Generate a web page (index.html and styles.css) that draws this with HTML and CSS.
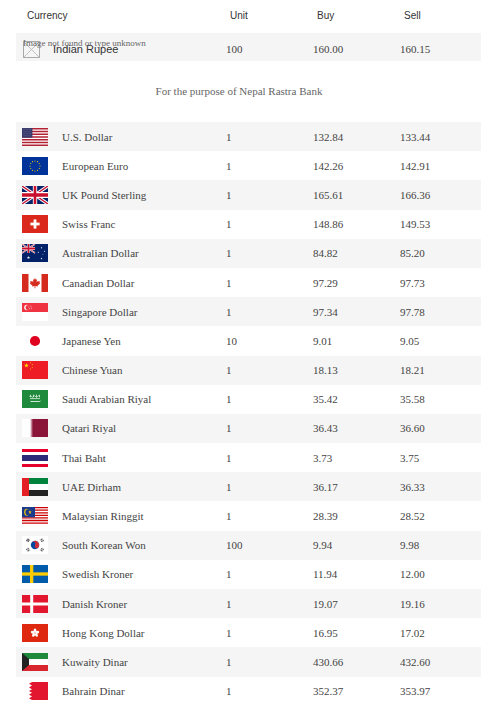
FILE: index.html
```html
<!DOCTYPE html>
<html lang="en">
<head>
<meta charset="utf-8">
<title>Exchange Rates</title>
<link rel="stylesheet" href="styles.css">
</head>
<body>
<svg class="defs" width="0" height="0" aria-hidden="true">
  <defs>
    <polygon id="st" points="0,-1 0.2245,-0.309 0.951,-0.309 0.363,0.118 0.588,0.809 0,0.382 -0.588,0.809 -0.363,0.118 -0.951,-0.309 -0.2245,-0.309"/>
    <g id="uj">
      <rect width="60" height="30" fill="#012169"/>
      <path d="M0,0 L60,30 M60,0 L0,30" stroke="#fff" stroke-width="6"/>
      <path d="M0,0 L60,30 M60,0 L0,30" stroke="#C8102E" stroke-width="2.5"/>
      <path d="M30,0 V30 M0,15 H60" stroke="#fff" stroke-width="10"/>
      <path d="M30,0 V30 M0,15 H60" stroke="#C8102E" stroke-width="6"/>
    </g>
  </defs>
</svg>

<div class="rates">
  <div class="head">
    <div class="h-cur">Currency</div>
    <div class="h-num">Unit</div>
    <div class="h-num">Buy</div>
    <div class="h-num">Sell</div>
  </div>

  <div class="inr">
    <div class="inr-name">
      <svg class="broken" viewBox="0 0 17 17"><rect x="0.5" y="0.5" width="16" height="16" fill="none" stroke="#a8a8a8"/><path d="M0.5,0.5 L16.5,16.5 M16.5,0.5 L0.5,16.5" stroke="#b5b5b5" stroke-width="0.8"/></svg>
      <span class="alt">Image not found or type unknown</span>
      <span class="inr-label">Indian Rupee</span>
    </div>
    <div class="num">100</div>
    <div class="num">160.00</div>
    <div class="num">160.15</div>
  </div>

  <p class="caption">For the purpose of Nepal Rastra Bank</p>

  <div class="list">
    <div class="row">
      <div class="flag"><svg viewBox="0 0 26 13" preserveAspectRatio="none"><rect width="26" height="13" fill="#fff"/><path d="M0,0.5H26M0,2.5H26M0,4.5H26M0,6.5H26M0,8.5H26M0,10.5H26M0,12.5H26" stroke="#b22234" stroke-width="1"/><rect width="10.4" height="7" fill="#3c3b6e"/><path d="M1,1H9.5M1.8,2.5H9M1,4H9.5M1.8,5.5H9" stroke="#aab" stroke-width="0.35" stroke-dasharray="0.5 1"/></svg></div>
      <div class="name">U.S. Dollar</div><div class="num">1</div><div class="num">132.84</div><div class="num">133.44</div>
    </div>
    <div class="row">
      <div class="flag"><svg viewBox="0 0 26 18"><rect width="26" height="18" fill="#003399"/><g fill="#ffcc00"><circle cx="13" cy="4" r=".55"/><circle cx="15.5" cy="4.67" r=".55"/><circle cx="17.33" cy="6.5" r=".55"/><circle cx="18" cy="9" r=".55"/><circle cx="17.33" cy="11.5" r=".55"/><circle cx="15.5" cy="13.33" r=".55"/><circle cx="13" cy="14" r=".55"/><circle cx="10.5" cy="13.33" r=".55"/><circle cx="8.67" cy="11.5" r=".55"/><circle cx="8" cy="9" r=".55"/><circle cx="8.67" cy="6.5" r=".55"/><circle cx="10.5" cy="4.67" r=".55"/></g></svg></div>
      <div class="name">European Euro</div><div class="num">1</div><div class="num">142.26</div><div class="num">142.91</div>
    </div>
    <div class="row">
      <div class="flag"><svg viewBox="0 0 60 30" preserveAspectRatio="none"><use href="#uj"/></svg></div>
      <div class="name">UK Pound Sterling</div><div class="num">1</div><div class="num">165.61</div><div class="num">166.36</div>
    </div>
    <div class="row">
      <div class="flag"><svg viewBox="0 0 26 18"><rect width="26" height="18" fill="#da291c"/><rect x="11.6" y="4.4" width="2.8" height="9.2" fill="#fff"/><rect x="8.4" y="7.6" width="9.2" height="2.8" fill="#fff"/></svg></div>
      <div class="name">Swiss Franc</div><div class="num">1</div><div class="num">148.86</div><div class="num">149.53</div>
    </div>
    <div class="row">
      <div class="flag"><svg viewBox="0 0 26 18"><rect width="26" height="18" fill="#012169"/><g transform="scale(0.2166 0.3)"><use href="#uj"/></g><g fill="#fff"><use href="#st" transform="translate(6.5 13.6) scale(1.7)"/><use href="#st" transform="translate(19.5 3.8) scale(0.95)"/><use href="#st" transform="translate(16.3 8.2) scale(0.95)"/><use href="#st" transform="translate(22.6 7.2) scale(0.95)"/><use href="#st" transform="translate(19.5 14.6) scale(1.05)"/><use href="#st" transform="translate(20.9 10.2) scale(0.55)"/></g></svg></div>
      <div class="name">Australian Dollar</div><div class="num">1</div><div class="num">84.82</div><div class="num">85.20</div>
    </div>
    <div class="row">
      <div class="flag"><svg viewBox="0 0 26 18"><rect width="26" height="18" fill="#fff"/><rect width="6.5" height="18" fill="#d52b1e"/><rect x="19.5" width="6.5" height="18" fill="#d52b1e"/><path d="M13,4 L13.9,5.8 15,5.3 14.6,8.2 16.1,6.7 16.5,7.6 18,7.3 17.5,9 18.2,9.4 15.6,11.5 15.9,12.4 13.35,12.1 13.45,14.2 H12.55 L12.65,12.1 10.1,12.4 10.4,11.5 7.8,9.4 8.5,9 8,7.3 9.5,7.6 9.9,6.7 11.4,8.2 11,5.3 12.1,5.8Z" fill="#d52b1e"/></svg></div>
      <div class="name">Canadian Dollar</div><div class="num">1</div><div class="num">97.29</div><div class="num">97.73</div>
    </div>
    <div class="row">
      <div class="flag"><svg viewBox="0 0 26 18"><rect width="26" height="18" fill="#fff"/><rect width="26" height="9" fill="#ef3340"/><circle cx="5" cy="4.5" r="2.8" fill="#fff"/><circle cx="6.1" cy="4.5" r="2.5" fill="#ef3340"/><g fill="#fff"><circle cx="8.3" cy="2.9" r=".45"/><circle cx="9.8" cy="4" r=".45"/><circle cx="9.2" cy="5.8" r=".45"/><circle cx="7.4" cy="5.8" r=".45"/><circle cx="6.8" cy="4" r=".45"/></g></svg></div>
      <div class="name">Singapore Dollar</div><div class="num">1</div><div class="num">97.34</div><div class="num">97.78</div>
    </div>
    <div class="row">
      <div class="flag"><svg viewBox="0 0 26 18"><rect width="26" height="18" fill="#fff"/><circle cx="13" cy="9" r="5.1" fill="#e0001f"/></svg></div>
      <div class="name">Japanese Yen</div><div class="num">10</div><div class="num">9.01</div><div class="num">9.05</div>
    </div>
    <div class="row">
      <div class="flag"><svg viewBox="0 0 26 18"><rect width="26" height="18" fill="#ee1c25"/><g fill="#ffde00"><use href="#st" transform="translate(4.4 4.6) scale(2.5)"/><use href="#st" transform="translate(8.6 1.8) scale(0.8)"/><use href="#st" transform="translate(10.3 3.6) scale(0.8)"/><use href="#st" transform="translate(10.3 6.2) scale(0.8)"/><use href="#st" transform="translate(8.6 8) scale(0.8)"/></g></svg></div>
      <div class="name">Chinese Yuan</div><div class="num">1</div><div class="num">18.13</div><div class="num">18.21</div>
    </div>
    <div class="row">
      <div class="flag"><svg viewBox="0 0 26 18"><rect width="26" height="18" fill="#1f8a3c"/><path d="M7.5,6.5 q1,-1.5 2,0 t2,0 t2,0 t2,0 t2,0 M8.5,4.8 v2.4 M11.5,4.6 v2.6 M14.5,4.6 v2.6 M17.5,4.8 v2.4 M8,8.6 h10" stroke="#fff" stroke-width="0.7" fill="none"/><path d="M8.5,11.5 H17.5 L18.5,11 M9.5,11 v1" stroke="#fff" stroke-width="0.8" fill="none"/></svg></div>
      <div class="name">Saudi Arabian Riyal</div><div class="num">1</div><div class="num">35.42</div><div class="num">35.58</div>
    </div>
    <div class="row">
      <div class="flag"><svg viewBox="0 0 26 18"><rect width="26" height="18" fill="#fff"/><path d="M26,0 H11 L8,1 11,2 8,3 11,4 8,5 11,6 8,7 11,8 8,9 11,10 8,11 11,12 8,13 11,14 8,15 11,16 8,17 11,18 H26Z" fill="#8a1538"/></svg></div>
      <div class="name">Qatari Riyal</div><div class="num">1</div><div class="num">36.43</div><div class="num">36.60</div>
    </div>
    <div class="row">
      <div class="flag"><svg viewBox="0 0 26 18"><rect width="26" height="18" fill="#fff"/><rect width="26" height="3" fill="#e4002b"/><rect y="15" width="26" height="3" fill="#e4002b"/><rect y="6" width="26" height="6" fill="#2d2a7a"/></svg></div>
      <div class="name">Thai Baht</div><div class="num">1</div><div class="num">3.73</div><div class="num">3.75</div>
    </div>
    <div class="row">
      <div class="flag"><svg viewBox="0 0 26 18"><rect width="26" height="18" fill="#fff"/><rect width="26" height="6" fill="#00843d"/><rect y="12" width="26" height="6" fill="#222"/><rect width="7" height="18" fill="#e31e24"/></svg></div>
      <div class="name">UAE Dirham</div><div class="num">1</div><div class="num">36.17</div><div class="num">36.33</div>
    </div>
    <div class="row">
      <div class="flag"><svg viewBox="0 0 28 14" preserveAspectRatio="none"><rect width="28" height="14" fill="#fff"/><path d="M0,0.5H28M0,2.5H28M0,4.5H28M0,6.5H28M0,8.5H28M0,10.5H28M0,12.5H28" stroke="#cc0001" stroke-width="1"/><rect width="14" height="8" fill="#1a3a8c"/><circle cx="5" cy="4" r="2.6" fill="#ffcc00"/><circle cx="5.9" cy="4" r="2.2" fill="#1a3a8c"/><use href="#st" transform="translate(8.6 4) scale(1.8)" fill="#ffcc00"/></svg></div>
      <div class="name">Malaysian Ringgit</div><div class="num">1</div><div class="num">28.39</div><div class="num">28.52</div>
    </div>
    <div class="row">
      <div class="flag"><svg viewBox="0 0 26 18"><rect width="26" height="18" fill="#fff"/><g transform="rotate(33.7 13 9)"><circle cx="13" cy="9" r="4.2" fill="#0047a0"/><path d="M8.8,9 A4.2,4.2 0 0 1 17.2,9 A2.1,2.1 0 0 1 13,9 A2.1,2.1 0 0 0 8.8,9Z" fill="#cd2e3a"/></g><g stroke="#222" stroke-width="0.7"><g transform="rotate(-56.3 6 4.3)"><path d="M4.5,3.3h3M4.5,4.3h3M4.5,5.3h3"/></g><g transform="rotate(56.3 20 4.3)"><path d="M18.5,3.3h3M18.5,4.3h3M18.5,5.3h3" stroke-dasharray="1.2 0.6"/></g><g transform="rotate(56.3 6 13.7)"><path d="M4.5,12.7h3M4.5,13.7h3M4.5,14.7h3" stroke-dasharray="1.2 0.6"/></g><g transform="rotate(-56.3 20 13.7)"><path d="M18.5,12.7h3M18.5,13.7h3M18.5,14.7h3" stroke-dasharray="1.2 0.6"/></g></g></svg></div>
      <div class="name">South Korean Won</div><div class="num">100</div><div class="num">9.94</div><div class="num">9.98</div>
    </div>
    <div class="row">
      <div class="flag"><svg viewBox="0 0 26 18"><rect width="26" height="18" fill="#005bab"/><rect x="8" width="3.3" height="18" fill="#fecc02"/><rect y="7.35" width="26" height="3.3" fill="#fecc02"/></svg></div>
      <div class="name">Swedish Kroner</div><div class="num">1</div><div class="num">11.94</div><div class="num">12.00</div>
    </div>
    <div class="row">
      <div class="flag"><svg viewBox="0 0 26 18"><rect width="26" height="18" fill="#e2172f"/><rect x="8.2" width="3" height="18" fill="#fff"/><rect y="7.5" width="26" height="3" fill="#fff"/></svg></div>
      <div class="name">Danish Kroner</div><div class="num">1</div><div class="num">19.07</div><div class="num">19.16</div>
    </div>
    <div class="row">
      <div class="flag"><svg viewBox="0 0 26 18"><rect width="26" height="18" fill="#de2910"/><g fill="#fff"><ellipse cx="13" cy="6.9" rx="1.4" ry="2.3"/><ellipse cx="13" cy="6.9" rx="1.4" ry="2.3" transform="rotate(72 13 9)"/><ellipse cx="13" cy="6.9" rx="1.4" ry="2.3" transform="rotate(144 13 9)"/><ellipse cx="13" cy="6.9" rx="1.4" ry="2.3" transform="rotate(216 13 9)"/><ellipse cx="13" cy="6.9" rx="1.4" ry="2.3" transform="rotate(288 13 9)"/></g><circle cx="13" cy="9" r="0.6" fill="#de2910"/></svg></div>
      <div class="name">Hong Kong Dollar</div><div class="num">1</div><div class="num">16.95</div><div class="num">17.02</div>
    </div>
    <div class="row">
      <div class="flag"><svg viewBox="0 0 26 18"><rect width="26" height="18" fill="#fff"/><rect width="26" height="6" fill="#1f8a3c"/><rect y="12" width="26" height="6" fill="#d8262e"/><path d="M0,0 L7,6 V12 L0,18Z" fill="#222"/></svg></div>
      <div class="name">Kuwaity Dinar</div><div class="num">1</div><div class="num">430.66</div><div class="num">432.60</div>
    </div>
    <div class="row">
      <div class="flag"><svg viewBox="0 0 26 18"><rect width="26" height="18" fill="#fff"/><path d="M26,0 H10 L7,1.8 10,3.6 7,5.4 10,7.2 7,9 10,10.8 7,12.6 10,14.4 7,16.2 10,18 H26Z" fill="#e2172f"/></svg></div>
      <div class="name">Bahrain Dinar</div><div class="num">1</div><div class="num">352.37</div><div class="num">353.97</div>
    </div>
  </div>
</div>
</body>
</html>
```

FILE: styles.css
```css
html, body {
  margin: 0;
  padding: 0;
  background: #fff;
}

body {
  font-family: "Liberation Serif", "Times New Roman", serif;
  color: #444;
}

.defs {
  position: absolute;
  width: 0;
  height: 0;
  overflow: hidden;
}

.rates {
  width: 465px;
  margin-left: 16px;
}

.head,
.inr,
.row {
  display: grid;
  grid-template-columns: 46px 164px 87px 87px 81px;
  align-items: center;
}

.head {
  height: 30px;
  margin-bottom: 3px;
  font-family: "Liberation Sans", Arial, sans-serif;
  font-size: 10px;
  color: #333;
}

.h-cur {
  grid-column: span 2;
  padding-left: 11px;
}

.h-num {
  padding-left: 4px;
}

.inr {
  height: 28px;
  background: #f5f5f5;
}

.inr-name {
  grid-column: span 2;
  position: relative;
  display: flex;
  align-items: center;
  padding-left: 7px;
  height: 100%;
}

.broken {
  width: 17px;
  height: 17px;
  flex: none;
  margin-top: 4px;
}

.alt {
  position: absolute;
  left: 7px;
  top: 5px;
  font-size: 9px;
  color: #666;
  white-space: nowrap;
}

.inr-label {
  margin-left: 13px;
  margin-top: 3px;
  font-family: "Liberation Sans", Arial, sans-serif;
  font-size: 11px;
  color: #333;
}

.inr .num {
  margin-top: 3px;
}

.num,
.name {
  font-size: 11px;
}

.caption {
  margin: 0;
  height: 61px;
  line-height: 61px;
  padding-right: 19px;
  text-align: center;
  font-size: 11px;
  color: #666;
}

.row {
  height: 29.2px;
}

.row:nth-child(odd) {
  background: #f5f5f5;
}

.flag {
  padding-left: 6px;
  display: flex;
  align-items: center;
}

.flag > svg {
  width: 26px;
  height: 18px;
  display: block;
}
```
